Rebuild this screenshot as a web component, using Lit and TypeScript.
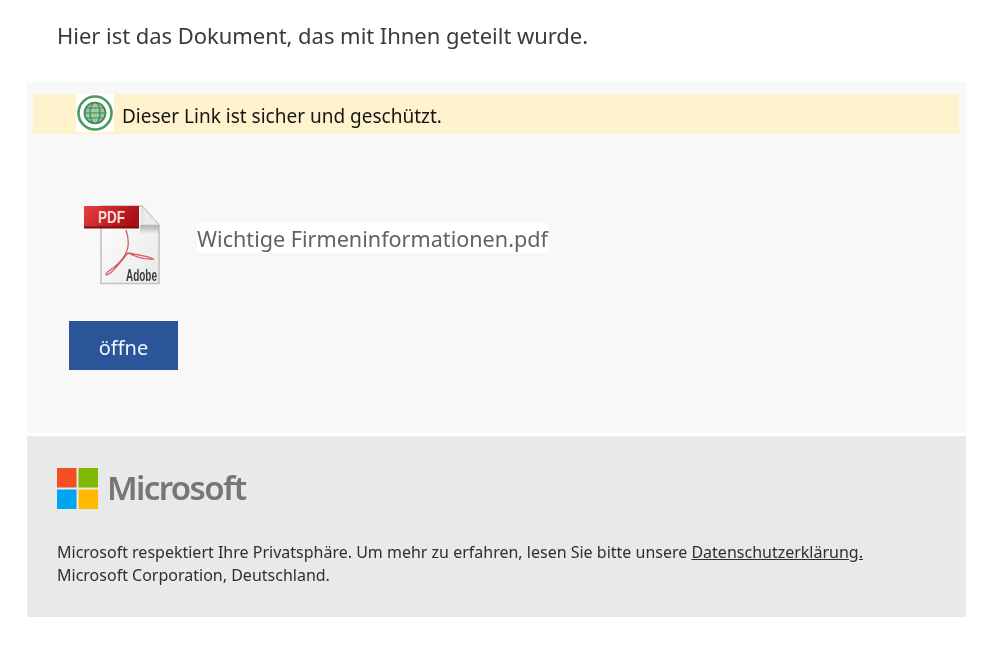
import { LitElement, html, css } from "lit";
import { customElement } from "lit/decorators.js";

@customElement("app-root")
export class AppRoot extends LitElement {
  static styles = css`
    :host { display: block; width: 1000px; height: 649px; background: #fff; font-family: "Noto Sans", "Open Sans", sans-serif; overflow: hidden; }
    .wrap { display: flex; flex-direction: column; padding: 0 34px 0 27px; filter: blur(0.35px); }
    .intro { margin: 0; padding: 20px 0 0 30px; height: 82px; box-sizing: border-box; font-size: 22px; line-height: 30px; color: #3a3a3a; letter-spacing: -0.04px; }
    .card { background: #f8f8f8; height: 351px; padding: 12px 7px 0 6px; box-sizing: border-box; display: flex; flex-direction: column; }
    .notice { display: flex; align-items: center; height: 40px; background: #fff3cd; padding-left: 43px; gap: 8px; font-size: 19px; color: #161616; }
    .notice span { padding-top: 4px; }
    .globe { width: 38px; height: 38px; background: #fff; flex: none; display: block; margin-top: -2px; }
    .file { display: flex; align-items: flex-start; gap: 37px; padding: 69px 0 0 49px; }
    .pdf { flex: none; display: block; overflow: visible; }
    .fname { font-size: 21.6px; line-height: 28px; color: #626262; background: #fff; margin-top: 20px; padding-top: 2px; }
    .btn { align-self: flex-start; margin: 34px 0 0 36px; width: 109px; height: 49px; padding-top: 4px; box-sizing: border-box; background: #2a5699; color: #f2f6fb; font-size: 20px; display: flex; align-items: center; justify-content: center; }
    .footer { margin-top: 3px; background: #e9e9e9; height: 181px; padding: 32px 0 0 30px; box-sizing: border-box; }
    .brand { display: flex; align-items: center; gap: 9px; height: 40px; }
    .ms { display: block; flex: none; }
    .word { font-size: 33px; font-weight: 600; color: #767676; letter-spacing: -1.6px; line-height: 40px; }
    .legal { margin: 33px 0 0; font-size: 16px; line-height: 23px; color: #2f2f2f; white-space: nowrap; }
    .legal a { color: inherit; text-decoration: underline; }
  `;

  render() {
    return html`<div class="wrap">
      <p class="intro">Hier ist das Dokument, das mit Ihnen geteilt wurde.</p>
      <section class="card">
        <div class="notice">
          <svg class="globe" viewBox="0 0 38 38" fill="none" stroke="#4c9a5c">
            <circle cx="19" cy="19" r="16.500" stroke-width="2.600"></circle>
            <circle cx="19" cy="19" r="10.500" fill="#9cc8a6" stroke="#3f8a50" stroke-width="1.700"></circle>
            <g stroke="#3f8a50" stroke-width="1.200">
              <ellipse cx="19" cy="19" rx="5" ry="10.500"></ellipse>
              <path d="M8.500 19h21M10 14h18M10 24h18"></path>
            </g>
          </svg>
          <span>Dieser Link ist sicher und geschützt.</span>
        </div>
        <div class="file">
          <svg class="pdf" width="78" height="84" viewBox="0 0 78 84">
            <defs>
              <linearGradient id="red" x1="0" x2="1" y1="0" y2="0.300">
                <stop offset="0" stop-color="#ea3f40"></stop>
                <stop offset="1" stop-color="#a80f14"></stop>
              </linearGradient>
              <linearGradient id="paper" x1="0" x2="1" y1="0" y2="1">
                <stop offset="0" stop-color="#ffffff"></stop>
                <stop offset="1" stop-color="#e8e8e8"></stop>
              </linearGradient>
              <linearGradient id="fold" x1="0" x2="0" y1="0" y2="1">
                <stop offset="0" stop-color="#9d9d9d" stop-opacity="0.800"></stop>
                <stop offset="1" stop-color="#9d9d9d" stop-opacity="0"></stop>
              </linearGradient>
            </defs>
            <path d="M19 3H60L77 22V80.500H19Z" fill="url(#paper)" stroke="#c2c2c2" stroke-width="1.600"></path>
            <rect x="58" y="22" width="19" height="9" fill="url(#fold)"></rect>
            <path d="M60 3L77 22H62Q60 22 60 20Z" fill="#ececec" stroke="#c8c8c8" stroke-width="0.800"></path>
            <path d="M44 27C47 36 47 44 44 50C40 58 33 64 27 68C23 71 23 73 27 71C33 67 39 58 46 50C52 53 62 57 71 56C66 53 56 52 46 50" fill="none" stroke="#d65a62" stroke-width="1.300"></path>
            <rect x="2" y="3" width="55" height="22" fill="url(#red)"></rect>
            <rect x="2" y="23.500" width="55" height="2" fill="#7c0c10"></rect>
            <text x="16" y="20" font-family="Liberation Sans" font-size="17" font-weight="700" fill="#f8dcdc" textLength="27" lengthAdjust="spacingAndGlyphs">PDF</text>
            <text x="44" y="78" font-family="Liberation Sans" font-size="17" font-weight="700" fill="#3c3c3c" textLength="31" lengthAdjust="spacingAndGlyphs">Adobe</text>
          </svg>
          <span class="fname">Wichtige Firmeninformationen.pdf</span>
        </div>
        <div class="btn">öffne</div>
      </section>
      <footer class="footer">
        <div class="brand">
          <svg class="ms" width="41" height="41" viewBox="0 0 41 41">
            <rect x="0" y="0" width="19.500" height="19.500" fill="#f25022"></rect>
            <rect x="21.500" y="0" width="19.500" height="19.500" fill="#7fba00"></rect>
            <rect x="0" y="21.500" width="19.500" height="19.500" fill="#00a4ef"></rect>
            <rect x="21.500" y="21.500" width="19.500" height="19.500" fill="#ffb900"></rect>
          </svg>
          <span class="word">Microsoft</span>
        </div>
        <p class="legal">Microsoft respektiert Ihre Privatsphäre. Um mehr zu erfahren, lesen Sie bitte unsere <a href="#">Datenschutzerklärung.</a><br>Microsoft Corporation, Deutschland.</p>
      </footer>
    </div>`;
  }
}
